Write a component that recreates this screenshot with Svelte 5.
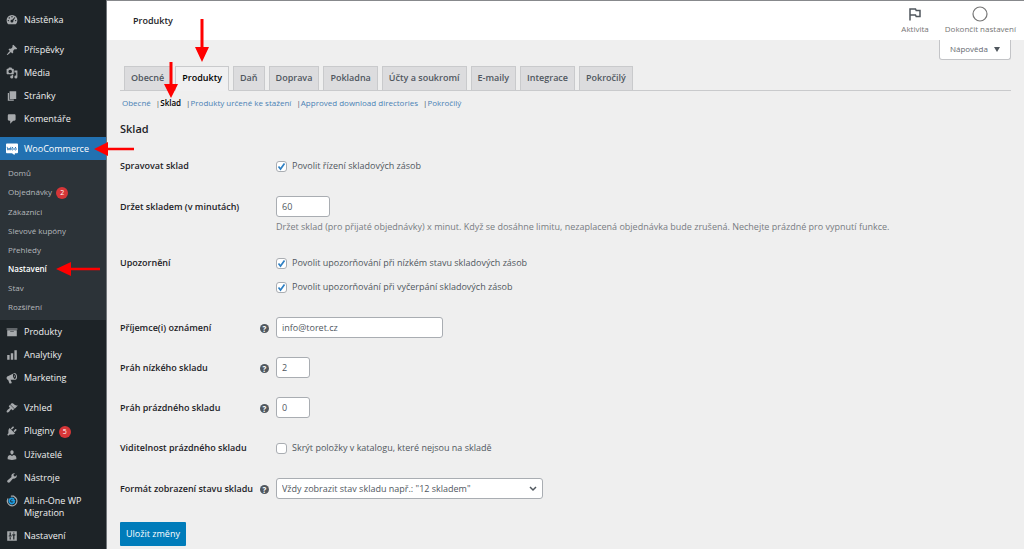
<script>
  const menuItems = [
    { label: 'Nástěnka', icon: 'dashboard' },
    { label: 'Příspěvky', icon: 'post', spaced: true },
    { label: 'Média', icon: 'media' },
    { label: 'Stránky', icon: 'page' },
    { label: 'Komentáře', icon: 'comment' },
    {
      label: 'WooCommerce',
      icon: 'woo',
      spaced: true,
      current: true,
      children: [
        { label: 'Domů' },
        { label: 'Objednávky', count: 2 },
        { label: 'Zákazníci' },
        { label: 'Slevové kupóny' },
        { label: 'Přehledy' },
        { label: 'Nastavení', current: true },
        { label: 'Stav' },
        { label: 'Rozšíření' },
      ],
    },
    { label: 'Produkty', icon: 'archive' },
    { label: 'Analytiky', icon: 'chart' },
    { label: 'Marketing', icon: 'megaphone' },
    { label: 'Vzhled', icon: 'brush', spaced: true },
    { label: 'Pluginy', icon: 'plug', count: 5 },
    { label: 'Uživatelé', icon: 'user' },
    { label: 'Nástroje', icon: 'wrench' },
    { label: 'All-in-One WP Migration', icon: 'migration' },
    { label: 'Nastavení', icon: 'sliders' },
  ];

  const tabs = [
    'Obecné',
    'Produkty',
    'Daň',
    'Doprava',
    'Pokladna',
    'Účty a soukromí',
    'E-maily',
    'Integrace',
    'Pokročilý',
  ];

  const sections = [
    'Obecné',
    'Sklad',
    'Produkty určené ke stažení',
    'Approved download directories',
    'Pokročilý',
  ];

  let activeTab = $state('Produkty');
  let activeSection = $state('Sklad');

  let settings = $state({
    manage: true,
    hold: '60',
    notifyLow: true,
    notifyNone: true,
    recipient: 'info@toret.cz',
    lowAmount: '2',
    noneAmount: '0',
    hideOutOfStock: false,
    format: 'always',
  });
</script>

{#snippet icon(name)}
  <svg class="icon" viewBox="0 0 20 20" fill="currentColor" aria-hidden="true">
    {#if name === 'dashboard'}
      <path fill-rule="evenodd" d="M3.8 17h12.4A9 9 0 1 0 3.800 17zM10 3.500a1.200 1.200 0 1 1 0 2.400 1.200 1.200 0 0 1 0-2.400zM5.500 5.300a1.200 1.200 0 1 1 0 2.400 1.200 1.200 0 0 1 0-2.400zM3.900 9.800a1.200 1.200 0 1 1 0 2.400 1.200 1.200 0 0 1 0-2.400zM16.100 9.800a1.200 1.200 0 1 1 0 2.400 1.200 1.200 0 0 1 0-2.400zM14.800 5.200l.6.6-3.300 5.600a2.300 2.300 0 1 1-1.700-1.700z" />
    {:else if name === 'post'}
      <path d="M10.440 3.020l1.820-1.820 6.360 6.350-1.830 1.820c-1.050-.68-2.480-.57-3.410.36l-.75.750c-.92.930-1.040 2.350-.35 3.410l-1.830 1.820-2.410-2.410-2.800 2.790c-.42.420-3.380 2.710-3.800 2.290s1.860-3.390 2.280-3.810l2.790-2.790L4.100 9.360l1.830-1.820c1.050.69 2.480.57 3.400-.36l.75-.750c.93-.92 1.050-2.350.36-3.410z" />
    {:else if name === 'media'}
      <path fill-rule="evenodd" d="M13 11V4c0-.55-.45-1-1-1h-1.670L9 1H5L3.670 3H2c-.55 0-1 .45-1 1v7c0 .55.450 1 1 1h10c.55 0 1-.45 1-1zM7 4.500a3 3 0 1 1 0 6 3 3 0 0 1 0-6z" />
      <path d="M14 6h5v10.500a2.500 2.500 0 1 1-2-2.450V9h-3zM10 13h2v3.500A2.500 2.500 0 1 1 10 14.050z" />
    {:else if name === 'page'}
      <path d="M6 15V2h11v13H6zm-1 1h8v2H3V5h2v11z" />
    {:else if name === 'comment'}
      <path d="M5 2h9c1.100 0 2 .9 2 2v7c0 1.100-.9 2-2 2h-2l-5 5v-5H5c-1.100 0-2-.9-2-2V4c0-1.100.9-2 2-2z" />
    {:else if name === 'woo'}
      <path fill="#fff" d="M1.500 1h17Q20 1 20 2.500v13q0 1.500-1.500 1.500H15l-1 3-4-3H1.500Q0 17 0 15.500v-13Q0 1 1.500 1z" />
      <path fill="none" stroke="#2271b1" stroke-width="1.400" stroke-linecap="round" stroke-linejoin="round" d="M2 7l1.200 5 2-3.700 1.600 3.700L8 7M10.700 7.500c2 0 1.700 4.500 0 4.500s-1.700-4.500 0-4.500zM15.700 7.500c2 0 1.700 4.500 0 4.500s-1.700-4.500 0-4.500z" />
    {:else if name === 'archive'}
      <path d="M19 4v2H1V4h18zM2 7h16v10H2V7zm11 3V9H7v1h6z" />
    {:else if name === 'chart'}
      <path d="M18 18V2h-4v16h4zm-6 0V7H8v11h4zm-6 0v-8H2v8h4z" />
    {:else if name === 'megaphone'}
      <path fill-rule="evenodd" d="M18.150 5.940c.46 1.620.38 3.220-.02 4.480-.42 1.280-1.260 2.180-2.300 2.480-.16.060-.26.060-.4.060-.06.020-.12.020-.18.020H8.300l-.8 0 2 4.400c.2.500.1 1-.4 1.200l-2.300.7c-.5.100-.9-.1-1.100-.6L3.600 13.400c-1.100-.2-2.100-1.100-2.500-2.500-.5-1.700.3-3.400 1.800-3.900l1-.3 9.400-4.600c.2-.1.400-.2.600-.2 1.700-.4 3.600 1.200 4.250 4.040zM14.700 11.700c1.600-.4 2.300-2.900 1.700-5.400-.6-2.300-2.200-3.700-3.500-3.300-1.200.400-1.600 2.500-1.100 4.700.700 2.500 1.900 4.200 2.900 4zM13.200 5.500c1.700-.1 2.600 2.900 1 3.500z" />
    {:else if name === 'brush'}
      <path d="M14.480 11.060L7.410 3.990l1.500-1.500c.5-.56 2.300-.47 3.510.32 1.210.8 1.430 1.280 2.910 2.100 1.180.640 2.450 1.260 4.450.850zm-.71.710L6.700 4.700 4.930 6.470c-.39.390-.39 1.020 0 1.410l1.060 1.060c.39.390.39 1.030 0 1.420-.6.600-1.430 1.110-2.210 1.690-.35.260-.7.530-1.010.84C1.430 14.230.4 16.080 1.400 17.070c.99 1 2.840-.03 4.180-1.360.31-.31.580-.66.850-1.020.57-.78 1.080-1.610 1.690-2.210.39-.39 1.020-.39 1.410 0l1.060 1.060c.39.390 1.020.39 1.410 0z" />
    {:else if name === 'plug'}
      <path d="M13.110 4.360L9.870 7.600 8 5.730l3.240-3.240c.35-.34 1.050-.2 1.560.32.52.51.660 1.210.310 1.550zm-8 1.770l.91-1.120 9.010 9.010-1.190.84c-.71.710-2.630 1.160-3.820 1.160H6.140L4.900 17.260c-.59.590-1.540.59-2.120 0-.59-.58-.59-1.530 0-2.120l1.240-1.240v-3.880c0-1.130.4-3.190 1.090-3.890zm7.260 3.970l3.240-3.240c.34-.35 1.040-.21 1.550.31.520.51.660 1.210.31 1.550l-3.240 3.250z" />
    {:else if name === 'user'}
      <path d="M10 9.250c-2.270 0-2.730-3.440-2.730-3.440C7 4.020 7.820 2 9.970 2c2.160 0 2.980 2.020 2.710 3.810 0 0-.41 3.440-2.680 3.440zm0 2.570L12.720 10c2.390 0 4.520 2.330 4.520 4.530v2.490s-3.650 1.130-7.240 1.130c-3.650 0-7.240-1.130-7.240-1.130v-2.490c0-2.250 1.940-4.480 4.470-4.480z" />
    {:else if name === 'wrench'}
      <path d="M16.680 9.770c-1.340 1.340-3.300 1.670-4.950.99l-5.410 6.520c-.99.990-2.590.99-3.580 0s-.99-2.590 0-3.570l6.520-5.420c-.68-1.650-.35-3.610.99-4.950 1.280-1.280 3.120-1.620 4.720-1.060l-2.890 2.890 2.820 2.820 2.860-2.870c.53 1.580.18 3.390-1.080 4.650z" />
    {:else if name === 'migration'}
      <g fill="none" stroke-linecap="round">
        <path stroke="#a7aaad" stroke-width="2" d="M13 2.500A8 8 0 1 1 3 6.500M9 2h4M13 2l3 3" />
        <path stroke="#1e9be0" stroke-width="3" d="M12.500 6.500A4.300 4.300 0 1 0 13.500 12M10 9.500h4" />
      </g>
    {:else if name === 'sliders'}
      <path fill-rule="evenodd" d="M2 2h16v16H2zM6 4h2v5h1.500v2h-5V9H6zM6 12h2v4H6zM12 4h2v2h-2zM10.500 7h5v2H14v7h-2V9h-1.500z" />
    {/if}
  </svg>
{/snippet}

{#snippet help(text)}
  <button class="help" type="button" aria-label={text}>?</button>
{/snippet}

<div class="admin">
  <nav class="sidebar" aria-label="Hlavní menu">
    <ul class="menu">
      {#each menuItems as item}
        <li class:spaced={item.spaced}>
          <a class="menu-link" class:current={item.current} href="#menu">
            {@render icon(item.icon)}
            <span>
              {item.label}
              {#if item.count}<span class="count">{item.count}</span>{/if}
            </span>
          </a>
          {#if item.children}
            <ul class="submenu">
              {#each item.children as child}
                <li>
                  <a class:current={child.current} href="#submenu">
                    {child.label}
                    {#if child.count}<span class="count">{child.count}</span>{/if}
                  </a>
                </li>
              {/each}
            </ul>
          {/if}
        </li>
      {/each}
    </ul>
  </nav>

  <main class="content">
    <header class="topbar">
      <h1>Produkty</h1>
      <div class="activity">
        <button type="button">
          <svg width="16" height="16" viewBox="0 0 16 16" fill="none" stroke="#50575e" stroke-width="1.500" aria-hidden="true">
            <path d="M3 14.500V3h5.500l.7 1.500H13v6H9.200L8.500 9H3" />
          </svg>
          Aktivita
        </button>
        <button type="button">
          <svg width="16" height="16" viewBox="0 0 16 16" fill="none" stroke="#757575" stroke-width="1.200" aria-hidden="true">
            <circle cx="8" cy="8" r="7" />
          </svg>
          Dokončit nastavení
        </button>
      </div>
    </header>

    <div class="screen-meta">
      <button class="help-tab" type="button">Nápověda <span class="caret"></span></button>
    </div>

    <div class="wrap">
      <nav class="tabs" aria-label="Nastavení">
        {#each tabs as tab}
          <a class:active={tab === activeTab} href="#tab" onclick={() => (activeTab = tab)}>{tab}</a>
        {/each}
      </nav>

      <ul class="sections">
        {#each sections as section}
          <li>
            <a class:active={section === activeSection} href="#section" onclick={() => (activeSection = section)}>{section}</a>
          </li>
        {/each}
      </ul>

      <h2>Sklad</h2>

      <form onsubmit={(e) => e.preventDefault()}>
        <div class="row">
          <span class="title">Spravovat sklad</span>
          <div class="field">
            <label class="check">
              <input type="checkbox" bind:checked={settings.manage} />
              Povolit řízení skladových zásob
            </label>
          </div>
        </div>

        <div class="row">
          <label class="title" for="hold">Držet skladem (v minutách)</label>
          <div class="field">
            <input id="hold" class="medium" type="text" bind:value={settings.hold} />
            <p class="description">
              Držet sklad (pro přijaté objednávky) x minut. Když se dosáhne limitu, nezaplacená objednávka bude zrušená. Nechejte prázdné pro vypnutí funkce.
            </p>
          </div>
        </div>

        <div class="row">
          <span class="title">Upozornění</span>
          <div class="field">
            <label class="check">
              <input type="checkbox" bind:checked={settings.notifyLow} />
              Povolit upozorňování při nízkém stavu skladových zásob
            </label>
            <label class="check">
              <input type="checkbox" bind:checked={settings.notifyNone} />
              Povolit upozorňování při vyčerpání skladových zásob
            </label>
          </div>
        </div>

        <div class="row">
          <label class="title" for="recipient">Příjemce(i) oznámení</label>
          {@render help('Nápověda: příjemci oznámení')}
          <div class="field">
            <input id="recipient" class="wide" type="text" bind:value={settings.recipient} />
          </div>
        </div>

        <div class="row">
          <label class="title" for="low">Práh nízkého skladu</label>
          {@render help('Nápověda: nízký sklad')}
          <div class="field">
            <input id="low" class="small" type="text" bind:value={settings.lowAmount} />
          </div>
        </div>

        <div class="row">
          <label class="title" for="none">Práh prázdného skladu</label>
          {@render help('Nápověda: prázdný sklad')}
          <div class="field">
            <input id="none" class="small" type="text" bind:value={settings.noneAmount} />
          </div>
        </div>

        <div class="row">
          <span class="title">Viditelnost prázdného skladu</span>
          <div class="field">
            <label class="check">
              <input type="checkbox" bind:checked={settings.hideOutOfStock} />
              Skrýt položky v katalogu, které nejsou na skladě
            </label>
          </div>
        </div>

        <div class="row">
          <label class="title" for="format">Formát zobrazení stavu skladu</label>
          {@render help('Nápověda: formát zobrazení')}
          <div class="field">
            <div class="select">
              <select id="format" bind:value={settings.format}>
                <option value="always">Vždy zobrazit stav skladu např.: "12 skladem"</option>
              </select>
              <svg width="8" height="6" viewBox="0 0 8 6" fill="none" stroke="#50575e" stroke-width="1.500" aria-hidden="true">
                <path d="M1 1l3 3 3-3" />
              </svg>
            </div>
          </div>
        </div>

        <button class="save" type="submit">Uložit změny</button>
      </form>
    </div>
  </main>

  <!-- red pointers laid over the screen -->
  <svg class="arrow to-tab" width="16" height="44" viewBox="0 0 16 44" fill="#f00" aria-hidden="true">
    <path d="M6.500 0h3v28H15L8 43 1 28h5.500z" />
  </svg>
  <svg class="arrow to-section" width="16" height="37" viewBox="0 0 16 37" fill="#f00" aria-hidden="true">
    <path d="M6.500 0h3v22H15L8 36 1 22h5.500z" />
  </svg>
  <svg class="arrow to-woo" width="40" height="16" viewBox="0 0 40 16" fill="#f00" aria-hidden="true">
    <path d="M40 6.700v2.600H14V15L0 8l14-7v5.700z" />
  </svg>
  <svg class="arrow to-settings" width="44" height="16" viewBox="0 0 44 16" fill="#f00" aria-hidden="true">
    <path d="M44 6.700v2.600H15V15L0 8l15-7v5.700z" />
  </svg>
</div>

<style>
  :global(body) {
    margin: 0;
    background: #efefef;
  }

  .admin {
    position: relative;
    display: flex;
    min-height: 100vh;
    font-family: 'Open Sans', 'Noto Sans', sans-serif;
    font-size: 9px;
    line-height: 12px;
    color: #50575e;
  }

  ul {
    list-style: none;
    margin: 0;
    padding: 0;
  }

  a {
    text-decoration: none;
  }

  button {
    font: inherit;
    color: inherit;
    border: 0;
    background: none;
    padding: 0;
    cursor: pointer;
  }

  .sidebar {
    flex: 0 0 106px;
    background: #1d2327;
    border-right: 1px solid #72767a;
  }

  .menu {
    padding-top: 8px;
  }

  .spaced {
    margin-top: 7px;
  }

  .menu-link {
    display: flex;
    gap: 6px;
    padding: 6px 6px 5px;
    color: #f0f0f1;
  }

  .menu-link.current {
    background: #2271b1;
    color: #fff;
  }

  .icon {
    flex: none;
    width: 12px;
    height: 12px;
    color: #a7aaad;
  }

  .count {
    display: inline-block;
    min-width: 12px;
    margin-left: 2px;
    border-radius: 6px;
    background: #d63638;
    color: #fff;
    font-size: 7px;
    text-align: center;
  }

  .submenu {
    padding: 4px 0 3px;
    background: #2c3338;
  }

  .submenu a {
    display: block;
    padding: 3px 8px 4px;
    font-size: 8px;
    color: #b4b8bc;
  }

  .submenu .current {
    color: #fff;
    font-weight: 600;
  }

  .content {
    flex: 1;
    min-width: 0;
    border-top: 1px solid #87898c;
  }

  .topbar {
    display: flex;
    align-items: center;
    justify-content: space-between;
    height: 39px;
    padding: 0 8px 0 26px;
    background: #fff;
  }

  h1 {
    margin: 0;
    font-size: 9px;
    font-weight: 600;
    color: #1d2327;
  }

  .activity {
    display: flex;
    gap: 16px;
  }

  .activity button {
    display: flex;
    flex-direction: column;
    align-items: center;
    gap: 1px;
    font-size: 8px;
    color: #757575;
  }

  .screen-meta {
    display: flex;
    justify-content: flex-end;
    padding-right: 13px;
  }

  .help-tab {
    padding: 3px 10px 4px;
    border: 1px solid #c3c4c7;
    border-top: 0;
    border-radius: 0 0 3px 3px;
    background: #fff;
    font-size: 8px;
    color: #646970;
  }

  .caret {
    display: inline-block;
    margin-left: 4px;
    border: 3px solid transparent;
    border-top: 5px solid #50575e;
    border-bottom: 0;
  }

  .wrap {
    padding: 6px 13px 0;
  }

  .tabs {
    display: flex;
    gap: 4px;
    padding: 0 4px;
    border-bottom: 1px solid #c9cacc;
  }

  .tabs a {
    padding: 5px 6px 6px;
    border: 1px solid #c9cacc;
    border-bottom: 0;
    background: #dcdcde;
    font-weight: 600;
    color: #50575e;
  }

  .tabs .active {
    margin-bottom: -1px;
    border-bottom: 1px solid #f0f0f1;
    background: #f0f0f1;
    color: #000;
  }

  .sections {
    display: flex;
    padding: 6px 2px 0;
    font-size: 8px;
    color: #50575e;
  }

  .sections li + li::before {
    content: '|';
    margin-left: 5px;
  }

  .sections a {
    color: #4a82b5;
  }

  .sections .active {
    color: #000;
    font-weight: 600;
  }

  h2 {
    margin: 12px 0 10px;
    font-size: 11px;
    line-height: 16px;
    font-weight: 600;
    color: #1d2327;
  }

  .row {
    display: flex;
    align-items: flex-start;
    padding: 8px 0 11px;
  }

  .title {
    flex: 0 0 140px;
    padding: 5px 0 4px;
    font-weight: 600;
    color: #1d2327;
  }

  .help {
    flex: none;
    width: 9px;
    height: 9px;
    margin: 7px -9px 0 0;
    border-radius: 5px;
    background: #50575e;
    color: #fff;
    font-size: 8px;
    line-height: 9px;
    font-weight: 700;
  }

  .field {
    flex: 1;
    margin-left: 16px;
  }

  .check {
    display: flex;
    align-items: center;
    gap: 5px;
    padding: 5px 0;
  }

  .check + .check {
    margin-top: 2px;
  }

  input,
  select {
    box-sizing: border-box;
    margin: 0;
    border: 1px solid #a9adb2;
    border-radius: 3px;
    background: #fff;
    font: inherit;
    color: #50575e;
    appearance: none;
  }

  input[type='text'] {
    display: block;
    height: 21px;
    padding: 0 5px;
  }

  input[type='checkbox'] {
    width: 11px;
    height: 11px;
  }

  input[type='checkbox']:checked {
    background: #fff url("data:image/svg+xml,%3Csvg xmlns='http://www.w3.org/2000/svg' viewBox='0 0 9 9'%3E%3Cpath d='M1.500 4.500l2 2.500 4-5.500' fill='none' stroke='%232f80c4' stroke-width='1.700'/%3E%3C/svg%3E") center / 9px 9px no-repeat;
  }

  .small {
    width: 34px;
  }

  .medium {
    width: 54px;
  }

  .wide {
    width: 167px;
  }

  .description {
    margin: 4px 0 0;
    color: #787c82;
  }

  .select {
    display: grid;
    align-items: center;
    width: 267px;
  }

  .select > * {
    grid-area: 1 / 1;
  }

  .select svg {
    justify-self: end;
    margin-right: 6px;
    pointer-events: none;
  }

  select {
    height: 21px;
    padding: 0 20px 0 5px;
  }

  .save {
    margin-top: 12px;
    padding: 6px;
    border-radius: 1px;
    background: #007cba;
    color: #fff;
  }

  .arrow {
    position: absolute;
    pointer-events: none;
  }

  .to-tab {
    left: 194px;
    top: 19px;
  }

  .to-section {
    left: 163px;
    top: 62px;
  }

  .to-woo {
    left: 94px;
    top: 141px;
  }

  .to-settings {
    left: 56px;
    top: 261px;
  }
</style>
